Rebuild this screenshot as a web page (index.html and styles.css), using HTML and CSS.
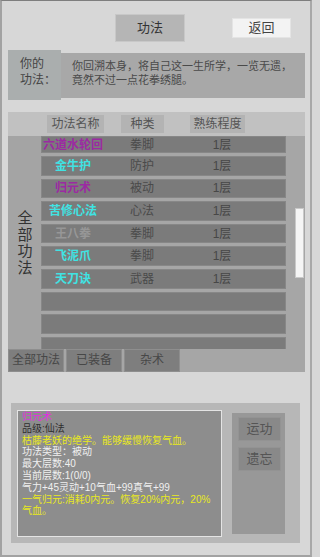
FILE: index.html
```html
<!DOCTYPE html>
<html lang="zh">
<head>
<meta charset="utf-8">
<link rel="stylesheet" href="styles.css">
</head>
<body>
<div class="top">
  <div class="title">功法</div>
  <div class="back">返回</div>
</div>
<div class="info">
  <div class="info-label">你的<br>功法：</div>
  <div class="info-text">你回溯本身，将自己这一生所学，一览无遗，<br>竟然不过一点花拳绣腿。</div>
</div>
<div class="panel">
  <div class="head">
    <div class="hcell h-name">功法名称</div>
    <div class="hcell h-type">种类</div>
    <div class="hcell h-lvl">熟练程度</div>
  </div>
  <div class="body">
    <div class="side"><span class="vtext">全部功法</span></div>
    <div class="list">
      <div class="row first"><span class="n purple">六道水轮回</span><span class="t">拳脚</span><span class="l">1层</span></div>
      <div class="row"><span class="n cyan">金牛护</span><span class="t">防护</span><span class="l">1层</span></div>
      <div class="row"><span class="n purple">归元术</span><span class="t">被动</span><span class="l">1层</span></div>
      <div class="row"><span class="n cyan">苦修心法</span><span class="t">心法</span><span class="l">1层</span></div>
      <div class="row"><span class="n grey">王八拳</span><span class="t">拳脚</span><span class="l">1层</span></div>
      <div class="row"><span class="n cyan">飞泥爪</span><span class="t">拳脚</span><span class="l">1层</span></div>
      <div class="row"><span class="n cyan">天刀诀</span><span class="t">武器</span><span class="l">1层</span></div>
      <div class="row"></div>
      <div class="row"></div>
      <div class="row"></div>
    </div>
    <div class="scroll"><div class="thumb"></div></div>
  </div>
  <div class="tabs">
    <div class="tab">全部功法</div>
    <div class="tab">已装备</div>
    <div class="tab">杂术</div>
  </div>
</div>
<div class="detail">
  <div class="desc">
    <div class="magenta">归元术</div>
    <div class="dark">品级:仙法</div>
    <div class="yellow">枯藤老妖的绝学。能够缓慢恢复气血。</div>
    <div class="white">功法类型：被动</div>
    <div class="white">最大层数:40</div>
    <div class="white">当前层数:1(0/0)</div>
    <div class="white">气力+45灵动+10气血+99真气+99</div>
    <div class="yellow">一气归元:消耗0内元。恢复20%内元，20%<br>气血。</div>
  </div>
  <div class="actions">
    <div class="btn">运功</div>
    <div class="btn">遗忘</div>
  </div>
</div>
</body>
</html>
```

FILE: styles.css
```css
html, body {
  margin: 0;
  padding: 0;
}
body {
  width: 312px;
  height: 557px;
  box-sizing: border-box;
  background: #d7d7d7;
  border-top: 1px solid #7e7e7e;
  border-left: 2px solid #a2a2a2;
  border-right: 2px solid #a8a8a8;
  border-bottom: 2px solid #a2a2a2;
  font-family: "Liberation Sans", "Noto Sans CJK SC", sans-serif;
  color: #444;
  overflow: hidden;
}
.top {
  display: flex;
  align-items: flex-start;
  padding-top: 13px;
  height: 36px;
}
.title {
  margin-left: 113px;
  width: 70px;
  height: 28px;
  box-sizing: border-box;
  background: #b5b5b5;
  border: 1px solid #c8c8c8;
  font-size: 13px;
  line-height: 26px;
  text-align: center;
  color: #333;
}
.back {
  margin-left: 47px;
  margin-top: 4px;
  width: 59px;
  height: 20px;
  box-sizing: border-box;
  background: #f3f3f3;
  border: 1px solid #e4e4e4;
  font-size: 13px;
  line-height: 18px;
  text-align: center;
  color: #444;
}
.info {
  display: flex;
  align-items: flex-start;
  margin-left: 6px;
  width: 297px;
  height: 50px;
}
.info-label {
  width: 53px;
  height: 50px;
  box-sizing: border-box;
  background: #aaaeae;
  padding: 6px 0 0 12px;
  font-size: 12px;
  line-height: 16px;
  color: #444;
}
.info-text {
  flex: 1;
  margin-top: 3px;
  height: 45px;
  box-sizing: border-box;
  background: #a8a8a8;
  padding: 6px 0 0 11px;
  font-size: 11px;
  line-height: 14px;
  color: #4a4a4a;
  white-space: nowrap;
}
.panel {
  margin-top: 12px;
  margin-left: 6px;
  width: 297px;
  height: 260px;
  display: flex;
  flex-direction: column;
  background: #a6a6a6;
}
.head {
  height: 24px;
  background: #c1c1c1;
  display: flex;
  align-items: flex-start;
  padding-top: 3px;
  box-sizing: border-box;
}
.hcell {
  height: 18px;
  background: #b3b3b3;
  font-size: 12px;
  line-height: 18px;
  text-align: center;
  color: #555;
}
.h-name { margin-left: 39px; width: 57px; }
.h-type { margin-left: 17px; width: 43px; }
.h-lvl { margin-left: 26px; width: 55px; }
.body {
  height: 213px;
  display: flex;
}
.side {
  width: 33px;
  display: flex;
  align-items: center;
  justify-content: center;
  background: #a4a4a4;
}
.vtext {
  writing-mode: vertical-rl;
  font-family: "Noto Sans CJK SC", sans-serif;
  font-size: 15px;
  line-height: 16px;
  letter-spacing: 1.5px;
  color: #333;
}
.list {
  width: 245px;
  height: 213px;
  overflow: hidden;
  display: flex;
  flex-direction: column;
  gap: 3px;
}
.row {
  flex: none;
  height: 19.6px;
  box-sizing: border-box;
  background: #7b7b7b;
  box-shadow: inset 0 0 0 1px #878787;
  display: grid;
  grid-template-columns: 64px 74px 86px 1fr;
  align-items: center;
  font-size: 12px;
  line-height: 16px;
  text-align: center;
}
.row.first {
  height: 17px;
}
.row .n { font-weight: bold; }
.row .t { color: #4a4a4a; }
.row .l { color: #474747; }
.purple { color: #9c2aa2; }
.cyan { color: #3fe3e3; }
.grey { color: #979797; }
.scroll {
  width: 19px;
  padding-top: 72px;
  padding-left: 9px;
  box-sizing: border-box;
}
.thumb {
  width: 9px;
  height: 70px;
  box-sizing: border-box;
  background: #f5f5f5;
  border: 1px solid #c9c9c9;
}
.tabs {
  height: 23px;
  display: flex;
  gap: 2px;
}
.tab {
  width: 56px;
  height: 23px;
  box-sizing: border-box;
  background: #7e7e7e;
  border: 1px solid #8e8e8e;
  font-size: 12px;
  line-height: 21px;
  text-align: center;
  color: #474747;
}
.detail {
  margin-top: 31px;
  margin-left: 9px;
  width: 289px;
  height: 140px;
  box-sizing: border-box;
  background: #b7b7b7;
  display: flex;
  align-items: flex-start;
  padding: 7px 0 0 6px;
}
.desc {
  width: 205px;
  height: 127px;
  box-sizing: border-box;
  background: #8d8d8d;
  border: 1px solid #e4e4e4;
  padding: 0 0 0 4px;
  font-size: 10px;
  line-height: 11.8px;
  white-space: nowrap;
}
.magenta { color: #e22fe2; }
.dark { color: #2f2f2f; }
.yellow { color: #e9e920; }
.white { color: #f0f0f0; }
.actions {
  margin-left: 10px;
  margin-top: 3px;
  width: 53px;
  height: 121px;
  box-sizing: border-box;
  background: #989898;
  padding: 4px 0 0 6px;
  display: flex;
  flex-direction: column;
  gap: 6px;
}
.btn {
  width: 43px;
  height: 24px;
  box-sizing: border-box;
  background: #898989;
  border: 1px solid #939393;
  font-size: 13px;
  line-height: 22px;
  text-align: center;
  color: #555;
}
```
